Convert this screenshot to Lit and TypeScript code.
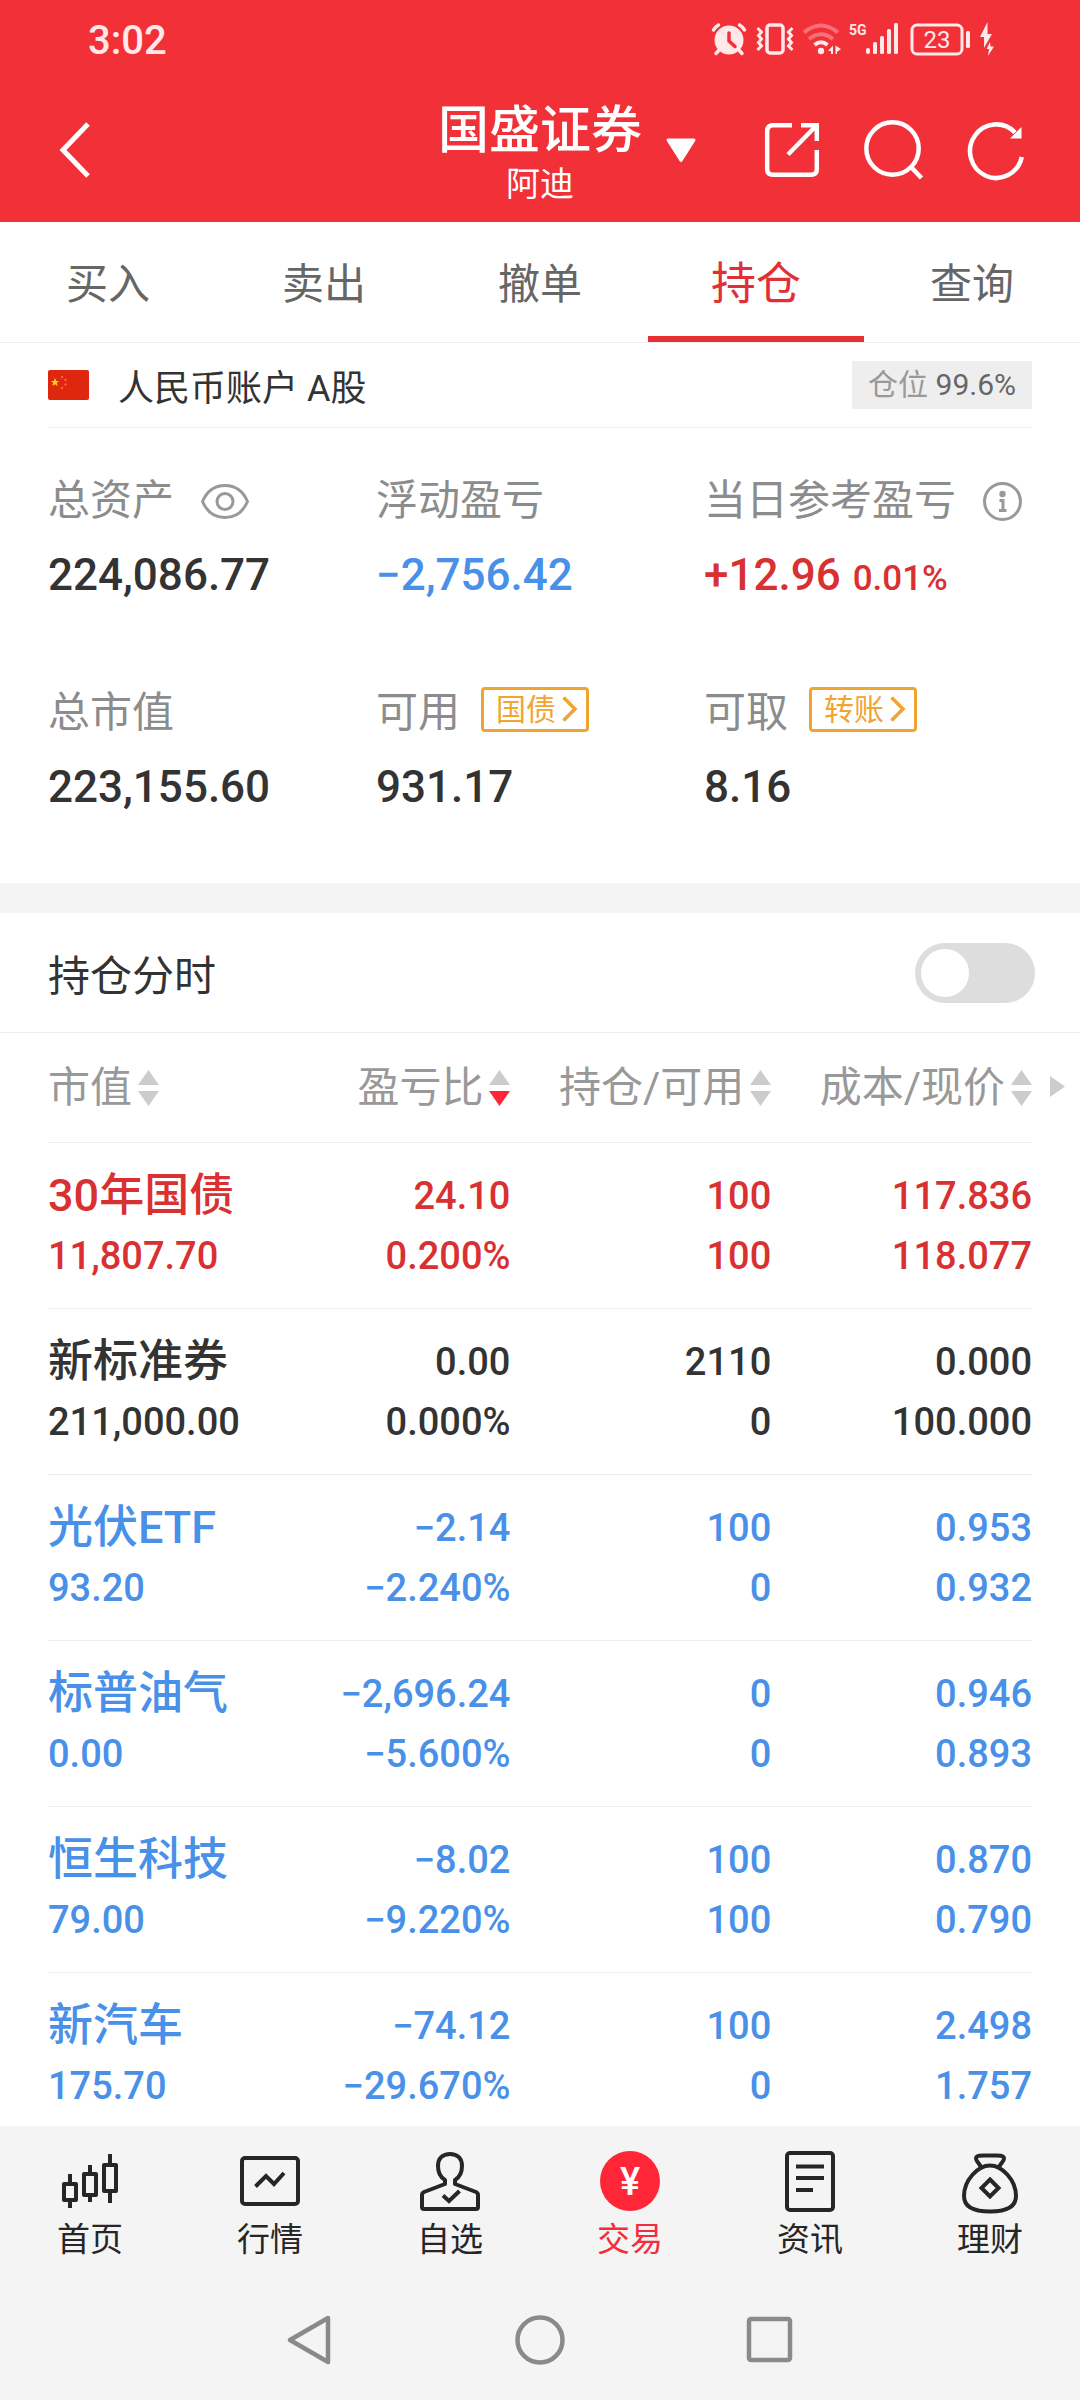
import { LitElement, html, css, svg } from "lit";
import { customElement, state } from "lit/decorators.js";
import { classMap } from "lit/directives/class-map.js";

type Tone = "up" | "flat" | "down";

interface Holding {
  name: string;
  tone: Tone;
  value: string;
  profit: string;
  ratio: string;
  held: string;
  usable: string;
  cost: string;
  price: string;
}

const HOLDINGS: Holding[] = [
  { name: "30年国债", tone: "up", value: "11,807.70", profit: "24.10", ratio: "0.200%", held: "100", usable: "100", cost: "117.836", price: "118.077" },
  { name: "新标准券", tone: "flat", value: "211,000.00", profit: "0.00", ratio: "0.000%", held: "2110", usable: "0", cost: "0.000", price: "100.000" },
  { name: "光伏ETF", tone: "down", value: "93.20", profit: "−2.14", ratio: "−2.240%", held: "100", usable: "0", cost: "0.953", price: "0.932" },
  { name: "标普油气", tone: "down", value: "0.00", profit: "−2,696.24", ratio: "−5.600%", held: "0", usable: "0", cost: "0.946", price: "0.893" },
  { name: "恒生科技", tone: "down", value: "79.00", profit: "−8.02", ratio: "−9.220%", held: "100", usable: "100", cost: "0.870", price: "0.790" },
  { name: "新汽车", tone: "down", value: "175.70", profit: "−74.12", ratio: "−29.670%", held: "100", usable: "0", cost: "2.498", price: "1.757" },
];

const TABS = ["买入", "卖出", "撤单", "持仓", "查询"];
const COLUMNS = ["市值", "盈亏比", "持仓/可用", "成本/现价"];

const NAV = [
  {
    label: "首页",
    icon: svg`<g fill="none" stroke="currentColor" stroke-width="4" stroke-linejoin="round">
      <rect x="4" y="33" width="12" height="16"/><path d="M10 23V33M10 49V57"/>
      <rect x="24" y="23" width="12" height="21"/><path d="M30 14V23M30 44V51"/>
      <rect x="44" y="14" width="12" height="26"/><path d="M50 3V14M50 40V52"/></g>`,
  },
  {
    label: "行情",
    icon: svg`<g fill="none" stroke="currentColor" stroke-width="4">
      <rect x="2" y="7" width="56" height="46" rx="3"/><path d="M15.5 35.5L26 25L34 33L44 22"/></g>`,
  },
  {
    label: "自选",
    icon: svg`<g fill="none" stroke="currentColor" stroke-width="4">
      <path d="M25 33V29C20 26 18 21 18 15C18 7 23 3 30 3S42 7 42 15C42 21 40 26 35 29V33L56 41Q58 42 58 44V56Q58 58 56 58H4Q2 58 2 56V44Q2 42 4 41Z" stroke-linejoin="round" stroke-dasharray="none"/>
      <path d="M23 44.5L29 50L39.5 40"/></g>`,
  },
  {
    label: "交易",
    icon: svg`<circle cx="30" cy="30" r="30" fill="#ff2638"/>
      <text x="30" y="44" text-anchor="middle" fill="#fff" class="yuan">¥</text>`,
  },
  {
    label: "资讯",
    icon: svg`<g fill="none" stroke="currentColor" stroke-width="4">
      <rect x="7" y="2" width="46" height="57" rx="3"/><path d="M16 15.5H44M16 27H44M16 39H33"/></g>`,
  },
  {
    label: "理财",
    icon: svg`<g fill="none" stroke="currentColor" stroke-width="4" stroke-linejoin="round">
      <path d="M21 16C19 12 16 10 16 7.5C16 3.5 23 4.500 30 4.500S44 3.5 44 7.5C44 10 41 12 39 16"/>
      <path d="M30 14.5C42 14.5 56 29 56 45C56 57 45 60.5 30 60.5S4 57 4 45C4 29 18 14.5 30 14.5Z"/>
      <path d="M30 28.5L38.5 37L30 45.5L21.5 37Z" stroke-linejoin="miter"/></g>`,
  },
];

@customElement("app-root")
export class AppRoot extends LitElement {
  @state() private tab = "持仓";
  @state() private intraday = false;

  static styles = css`
    :host {
      display: flex;
      flex-direction: column;
      height: 100vh;
      overflow: hidden;
      background: #fff;
      color: #333;
      font-family: Roboto, "Noto Sans CJK SC", sans-serif;
    }
    *, *::before { box-sizing: border-box; }
    button {
      margin: 0;
      padding: 0;
      border: 0;
      background: none;
      color: inherit;
      font: inherit;
      cursor: pointer;
    }
    svg { display: block; flex: none; overflow: visible; }

    .head { flex: none; background: #f23038; color: #fff; padding-bottom: 4px; }
    .status {
      display: flex;
      align-items: center;
      justify-content: space-between;
      height: 82px;
      padding: 0 86px 0 88px;
      color: #ffe8e9;
    }
    .time { font-size: 40px; line-height: 48px; font-weight: 500; }
    .signals { display: flex; align-items: center; gap: 10px; padding-bottom: 4px; }
    .net { font-size: 14px; font-weight: 700; }
    .level { font-size: 24px; }

    .bar { display: grid; grid-template-columns: 1fr auto 1fr; height: 136px; }
    .side { display: flex; align-items: center; }
    .side.left { padding-left: 60px; }
    .side.right { justify-content: space-between; padding: 0 55px 0 24px; }
    .tools { display: flex; align-items: center; gap: 45px; }
    .title { padding-top: 19px; text-align: center; }
    .title h1 { margin: 0; font-size: 51px; line-height: 60px; font-weight: 500; }
    .title p { margin: 0; font-size: 34px; line-height: 46px; }

    .tabs { flex: none; display: flex; height: 121px; border-bottom: 1px solid #ececec; }
    .tab {
      flex: 1;
      padding-top: 3px;
      border-bottom: 6px solid transparent;
      color: #666;
      font-size: 42px;
    }
    .tab.on { color: #e03034; border-color: #e63032; font-size: 45px; }

    main { flex: 1; min-height: 0; overflow: hidden; }
    .account {
      display: flex;
      align-items: center;
      height: 85px;
      margin: 0 48px;
      border-bottom: 1px solid #ececec;
      font-size: 36px;
    }
    .account .kind { flex: 1; padding-left: 29px; }
    .share {
      padding: 0 16px;
      background: #eee;
      color: #666;
      font-size: 30px;
      line-height: 48px;
    }
    .share span { color: #999; }

    .summary {
      display: grid;
      grid-template-columns: repeat(3, 1fr);
      row-gap: 78px;
      margin: 0;
      padding: 43px 48px 66px;
    }
    .metric { display: grid; row-gap: 14px; align-content: start; }
    .metric dt {
      display: flex;
      align-items: center;
      height: 60px;
      color: #8c8c8c;
      font-size: 42px;
      line-height: 60px;
      white-space: nowrap;
    }
    .metric dd { margin: 0; font-size: 44px; line-height: 60px; font-weight: 500; white-space: nowrap; }
    .metric dd small { margin-left: 12px; font-size: 35px; line-height: 40px; }
    .hint { margin-left: 27px; color: #999; }
    .chip {
      display: flex;
      align-items: center;
      gap: 6px;
      height: 45px;
      margin: 0 0 8px 21px;
      padding: 0 9px 0 12px;
      border: 3px solid #f0a431;
      border-radius: 4px;
      color: #f0a431;
      font-size: 30px;
      line-height: 39px;
    }
    .up { color: #d93031; }
    .flat { color: #333; }
    .down { color: #4990e8; }

    .intraday {
      display: flex;
      align-items: center;
      justify-content: space-between;
      height: 150px;
      padding: 0 45px 0 48px;
      border-top: 30px solid #f4f4f4;
      border-bottom: 1px solid #ececec;
      font-size: 42px;
    }
    .switch {
      appearance: none;
      display: flex;
      width: 120px;
      height: 60px;
      margin: 0;
      padding: 6px;
      border-radius: 30px;
      background: #ddd;
      cursor: pointer;
    }
    .switch::before { content: ""; width: 48px; height: 48px; border-radius: 50%; background: #fff; }
    .switch:checked { justify-content: flex-end; background: #f23038; }

    .holdings { display: grid; grid-template-columns: 1fr 48px; padding-left: 48px; }
    table { width: 100%; table-layout: fixed; border-collapse: collapse; }
    th, td { padding: 0; border-bottom: 1px solid #ececec; text-align: right; font-weight: 500; white-space: nowrap; }
    th:first-child, td:first-child { text-align: left; }
    thead th { height: 109px; color: #999; font-size: 42px; font-weight: 400; }
    .c1 { width: 25%; }
    .c2 { width: 22%; }
    .sort { display: inline-flex; align-items: center; gap: 6px; line-height: 48px; }
    .cell { display: block; font-size: 38px; line-height: 60px; }
    .cell.name { font-size: 45px; }
    tbody th, tbody td { height: 166px; padding-top: 2px; }
    .more { align-self: start; height: 107px; padding-left: 18px; color: #ccc; }

    .bottom { flex: none; background: #f4f4f4; }
    .nav { display: grid; grid-template-columns: repeat(6, 1fr); padding-top: 25px; }
    .nav a {
      display: flex;
      flex-direction: column;
      align-items: center;
      gap: 7px;
      color: #262626;
      font-size: 33px;
      line-height: 44px;
      text-decoration: none;
    }
    .nav a.on { color: #f42c3c; }
    .yuan { font-size: 38px; font-weight: 500; }
    .system { display: flex; justify-content: center; gap: 180px; padding: 53px 0 35px; color: #8a8a8a; }
  `;

  private sortMark(active: boolean) {
    return html`<svg width="21" height="36" viewBox="0 0 21 36" aria-hidden="true">
      <path d="M10.5 0L21 15H0Z" fill="#ccc" />
      <path d="M0 21H21L10.5 36Z" fill=${active ? "#ff2638" : "#ccc"} />
    </svg>`;
  }

  private chip(label: string) {
    return html`<button class="chip">
      ${label}<svg width="15" height="26" viewBox="0 0 15 26" aria-hidden="true">
        <path d="M1.5 1.5L13 13L1.5 24.5" fill="none" stroke="currentColor" stroke-width="3.5" />
      </svg>
    </button>`;
  }

  private renderStatus() {
    return html`<div class="status">
      <span class="time">3:02</span>
      <div class="signals">
        <svg width="34" height="33" viewBox="0 0 34 33" fill="none" stroke="currentColor" stroke-width="3.5" stroke-linecap="round">
          <circle cx="17" cy="17" r="14.5" fill="currentColor" stroke="none" />
          <path d="M1.5 7Q3 4 6.5 2M27.5 2Q31 4 32.5 7M4 30.5L8 26M30 30.5L26 26" />
          <path d="M17 10V18L23 23.5" stroke="#f23038" />
        </svg>
        <svg width="38" height="33" viewBox="0 0 38 33" fill="none" stroke="currentColor" stroke-width="3">
          <rect x="11" y="2" width="16" height="28" rx="3" stroke-width="3.5" />
          <path d="M1.5 5L5.5 9L2.5 12.5L5.5 16L2.5 19.5L5.5 23L1.5 27M36.5 5L32.5 9L35.5 12.5L32.5 16L35.5 19.5L32.5 23L36.5 27" />
        </svg>
        <svg width="36" height="33" viewBox="0 0 36 33" fill="none" stroke="currentColor" stroke-width="4">
          <path d="M0 9.5Q17 -4.5 34 9.5M5 16Q17 6.5 29 16" opacity="0.35" />
          <path d="M10.5 22Q17 16.5 23.5 22" />
          <circle cx="17" cy="28" r="3.2" fill="currentColor" stroke="none" />
          <path d="M24 28L29 22.5V31H27V28ZM31.5 22.5V31H33V29L37 26Z" fill="currentColor" stroke="none" />
        </svg>
        <svg width="50" height="33" viewBox="0 0 50 33" fill="currentColor">
          <text class="net" x="-1" y="12">5G</text>
          <rect x="16" y="25" width="4" height="6" rx="2" />
          <rect x="23" y="19" width="4" height="12" rx="1.5" />
          <rect x="30" y="13" width="4" height="18" rx="1.5" />
          <rect x="37" y="6" width="4" height="25" rx="1.5" />
          <rect x="44" y="0" width="4" height="31" rx="1.5" />
        </svg>
        <svg width="60" height="33" viewBox="0 0 60 33" fill="currentColor">
          <rect x="2" y="2" width="50" height="29" rx="5" fill="none" stroke="currentColor" stroke-width="3" />
          <text class="level" x="27" y="25" text-anchor="middle">23</text>
          <rect x="56" y="8" width="4" height="17" rx="1.5" />
        </svg>
        <svg width="14" height="33" viewBox="0 0 14 33" fill="currentColor">
          <path d="M7.500 -1L0 14H4V25L12 11H7.500ZM10 19L6.500 26H9L8 33L14 23.500H10.500Z" />
        </svg>
      </div>
    </div>`;
  }

  private renderHeader() {
    return html`<header class="head">
      ${this.renderStatus()}
      <div class="bar">
        <div class="side left">
          <button aria-label="返回">
            <svg width="30" height="56" viewBox="0 0 30 56" fill="none" stroke="currentColor" stroke-width="5">
              <path d="M28 2L3 28L28 54" />
            </svg>
          </button>
        </div>
        <div class="title">
          <h1>国盛证券</h1>
          <p>阿迪</p>
        </div>
        <div class="side right">
          <button aria-label="切换账户">
            <svg width="30" height="25" viewBox="0 0 30 25" fill="currentColor" stroke="currentColor" stroke-width="3" stroke-linejoin="round">
              <path d="M2 2H28L15 22.5Z" />
            </svg>
          </button>
          <div class="tools">
            <button aria-label="分享">
              <svg width="54" height="54" viewBox="0 0 54 54" fill="none" stroke="currentColor" stroke-width="4.5">
                <path d="M27 2.2H8Q2.2 2.2 2.2 8V46Q2.2 51.8 8 51.8H46Q51.8 51.8 51.8 46V27" />
                <path d="M36 2.2H51.8V18M51 3L23 31.5" />
              </svg>
            </button>
            <button aria-label="搜索">
              <svg width="59" height="60" viewBox="0 0 59 60" fill="none" stroke="currentColor" stroke-width="4.5">
                <circle cx="28.5" cy="28.5" r="26.2" />
                <path d="M47 47L57.5 58" />
              </svg>
            </button>
            <button aria-label="刷新">
              <svg width="57" height="59" viewBox="0 0 57 59" fill="none" stroke="currentColor" stroke-width="4.5">
                <path d="M53.8 36A26.2 26.8 0 1 1 47 11.5" />
                <path d="M53.5 6V17.5H42Z" fill="currentColor" stroke="none" />
              </svg>
            </button>
          </div>
        </div>
      </div>
    </header>`;
  }

  private renderSummary() {
    return html`<dl class="summary">
      <div class="metric">
        <dt>
          总资产
          <button class="hint" aria-label="隐藏金额">
            <svg width="48" height="35" viewBox="0 0 48 35" fill="none" stroke="currentColor" stroke-width="3">
              <path d="M1.5 17.5C6 7 14 1.5 24 1.5S42 7 46.5 17.5C42 28 34 33.5 24 33.5S6 28 1.5 17.5Z" stroke-linejoin="round" />
              <circle cx="24" cy="17.5" r="8" />
            </svg>
          </button>
        </dt>
        <dd>224,086.77</dd>
      </div>
      <div class="metric">
        <dt>浮动盈亏</dt>
        <dd class="down">−2,756.42</dd>
      </div>
      <div class="metric">
        <dt>
          当日参考盈亏
          <button class="hint" aria-label="说明">
            <svg width="39" height="39" viewBox="0 0 39 39" fill="none" stroke="currentColor" stroke-width="3">
              <circle cx="19.5" cy="19.5" r="18" />
              <circle cx="19.5" cy="12" r="3.2" fill="currentColor" stroke="none" />
              <path d="M16.5 18.5H20V28.5M16 28.5H23.5" />
            </svg>
          </button>
        </dt>
        <dd class="up">+12.96<small>0.01%</small></dd>
      </div>
      <div class="metric">
        <dt>总市值</dt>
        <dd>223,155.60</dd>
      </div>
      <div class="metric">
        <dt>可用${this.chip("国债")}</dt>
        <dd>931.17</dd>
      </div>
      <div class="metric">
        <dt>可取${this.chip("转账")}</dt>
        <dd>8.16</dd>
      </div>
    </dl>`;
  }

  private renderRow(h: Holding) {
    return html`<tr class=${h.tone}>
      <th scope="row"><span class="cell name">${h.name}</span><span class="cell">${h.value}</span></th>
      <td><span class="cell">${h.profit}</span><span class="cell">${h.ratio}</span></td>
      <td><span class="cell">${h.held}</span><span class="cell">${h.usable}</span></td>
      <td><span class="cell">${h.cost}</span><span class="cell">${h.price}</span></td>
    </tr>`;
  }

  render() {
    return html`
      ${this.renderHeader()}
      <nav class="tabs">
        ${TABS.map(
          (t) => html`<button class=${classMap({ tab: true, on: t === this.tab })} @click=${() => (this.tab = t)}>${t}</button>`
        )}
      </nav>
      <main>
        <section class="account">
          <svg width="41" height="30" viewBox="0 0 41 30" aria-hidden="true">
            <rect width="41" height="30" rx="2" fill="#df2710" />
            <path d="M7 8L8.2 11H11L8.8 12.8L9.6 16L7 14.2L4.4 16L5.2 12.8L3 11H5.8Z" fill="#ffd21c" />
            <g fill="#f0701c">
              <circle cx="14" cy="7" r="1.2" /><circle cx="17.5" cy="10" r="1.2" />
              <circle cx="17.5" cy="14.5" r="1.2" /><circle cx="14" cy="18" r="1.2" />
            </g>
          </svg>
          <span class="kind">人民币账户 A股</span>
          <span class="share"><span>仓位</span> 99.6%</span>
        </section>
        ${this.renderSummary()}
        <section class="intraday">
          <label for="intraday">持仓分时</label>
          <input
            id="intraday"
            class="switch"
            type="checkbox"
            role="switch"
            .checked=${this.intraday}
            @change=${(e: Event) => (this.intraday = (e.target as HTMLInputElement).checked)}
          />
        </section>
        <section class="holdings">
          <table>
            <colgroup><col class="c1" /><col class="c2" /><col /><col /></colgroup>
            <thead>
              <tr>
                ${COLUMNS.map((c) => html`<th scope="col"><button class="sort">${c}${this.sortMark(c === "盈亏比")}</button></th>`)}
              </tr>
            </thead>
            <tbody>
              ${HOLDINGS.map((h) => this.renderRow(h))}
            </tbody>
          </table>
          <button class="more" aria-label="更多列">
            <svg width="15" height="21" viewBox="0 0 15 21" fill="currentColor"><path d="M0 0L15 10.5L0 21Z" /></svg>
          </button>
        </section>
      </main>
      <footer class="bottom">
        <nav class="nav">
          ${NAV.map(
            (n) => html`<a href="#" class=${classMap({ on: n.label === "交易" })}>
              <svg width="60" height="60" viewBox="0 0 60 60" aria-hidden="true">${n.icon}</svg>${n.label}
            </a>`
          )}
        </nav>
        <div class="system">
          <button aria-label="后退">
            <svg width="50" height="50" viewBox="0 0 50 50" fill="none" stroke="currentColor" stroke-width="4.5" stroke-linejoin="round">
              <path d="M43 3L5 25L43 47Z" />
            </svg>
          </button>
          <button aria-label="主屏幕">
            <svg width="50" height="50" viewBox="0 0 50 50" fill="none" stroke="currentColor" stroke-width="4.5">
              <circle cx="25" cy="25" r="22.5" />
            </svg>
          </button>
          <button aria-label="最近任务">
            <svg width="50" height="50" viewBox="0 0 50 50" fill="none" stroke="currentColor" stroke-width="4.5">
              <rect x="4" y="4" width="41" height="41" rx="2" />
            </svg>
          </button>
        </div>
      </footer>
    `;
  }
}
